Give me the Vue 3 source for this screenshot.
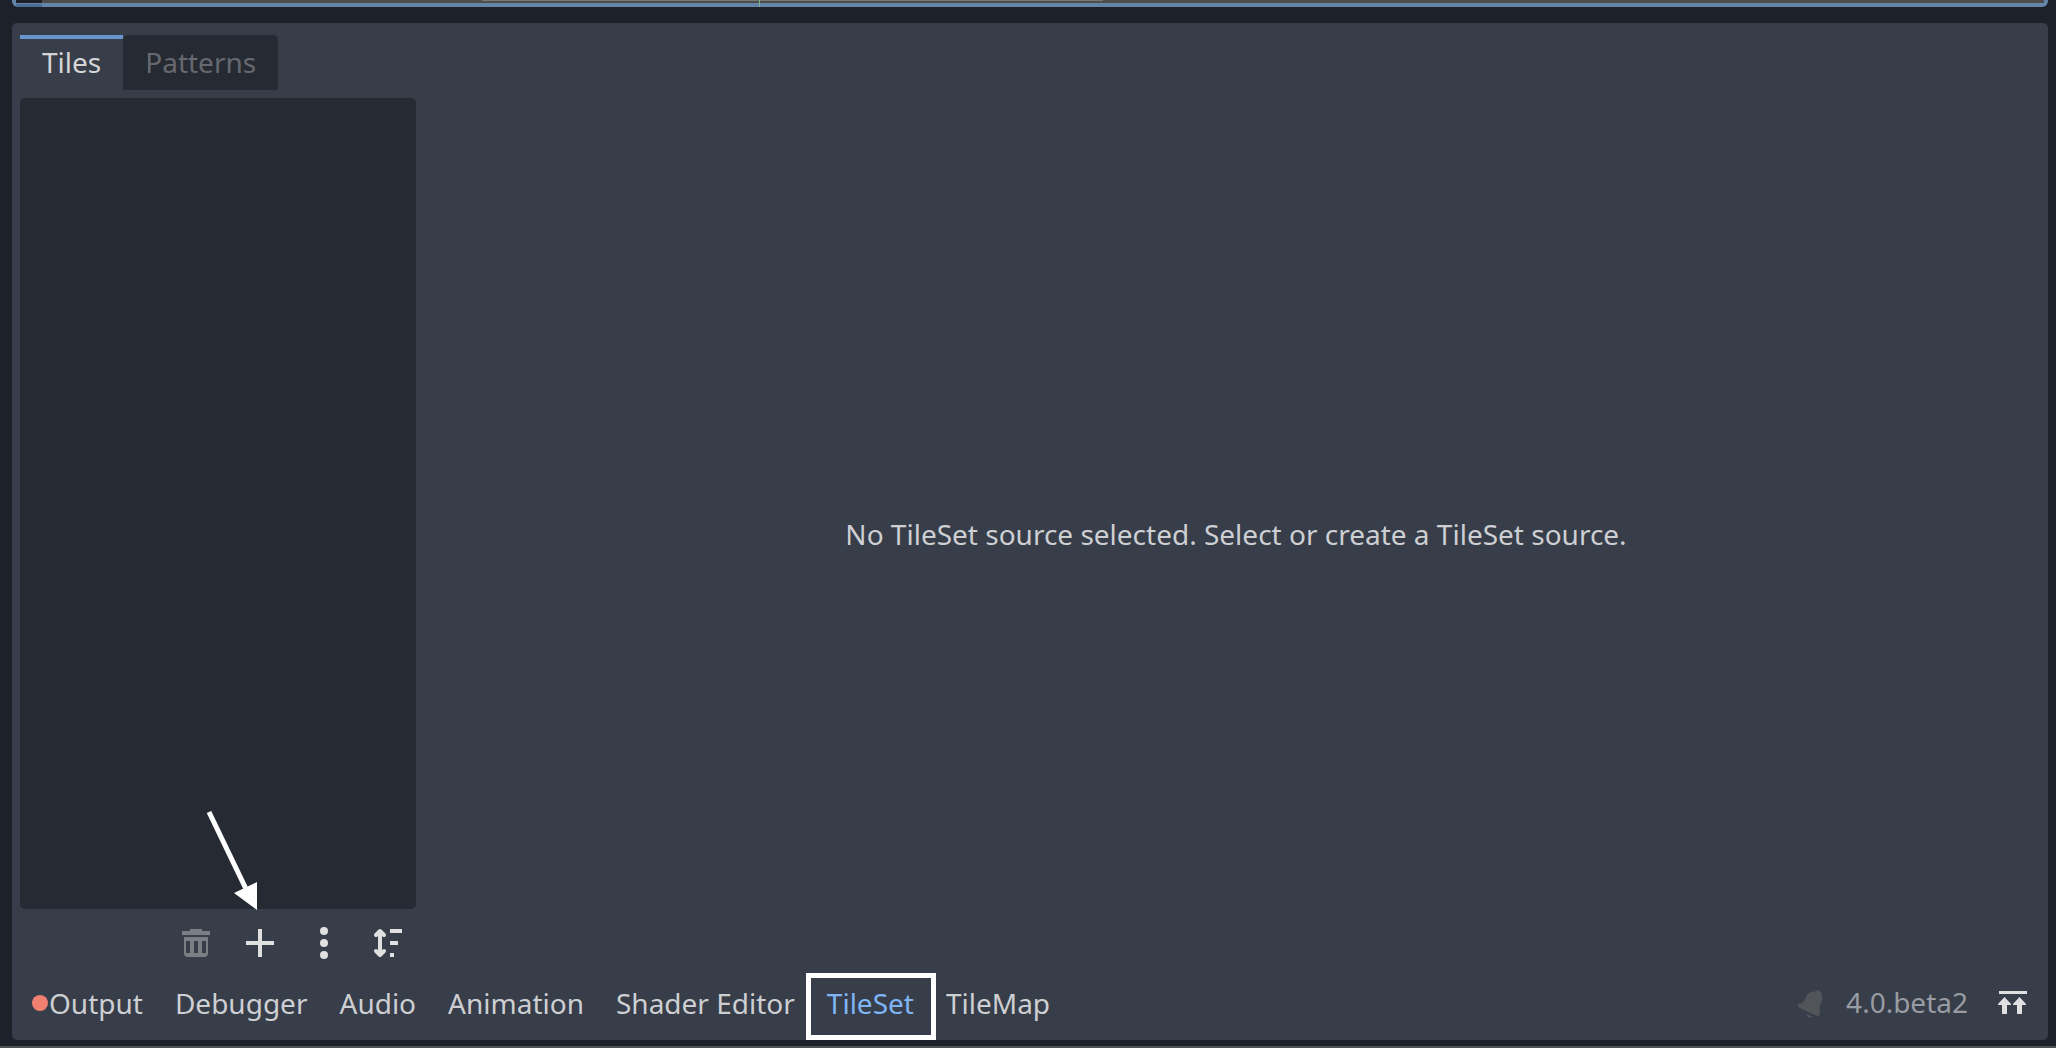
<script setup>
import { ref } from 'vue'

const activeTab = ref('Tiles')
const tabs = ['Tiles', 'Patterns']

const activePanel = ref('TileSet')
const panels = [
  { name: 'Output', alert: true },
  { name: 'Debugger' },
  { name: 'Audio' },
  { name: 'Animation' },
  { name: 'Shader Editor' },
  { name: 'TileSet', highlighted: true },
  { name: 'TileMap' },
]
</script>

<template>
  <div class="editor">
    <div class="viewport">
      <div class="ruler"></div>
      <div class="canvas">
        <div class="scrollbar"></div>
        <div class="axis"></div>
      </div>
    </div>

    <main class="dock">
      <div class="tabs" role="tablist">
        <button
          v-for="tab in tabs"
          :key="tab"
          type="button"
          role="tab"
          class="tab"
          :class="{ active: tab === activeTab }"
          :aria-selected="tab === activeTab"
          @click="activeTab = tab"
        >{{ tab }}</button>
      </div>

      <div class="content">
        <section class="sources">
          <div class="source-list"></div>
          <div class="tools">
            <button type="button" class="tool" disabled aria-label="Delete source">
              <svg viewBox="0 0 32 32" class="icon">
                <path fill-rule="evenodd" d="M10 2h12v2h8v4H2V4h8zM4 10h24v16q0 4-4 4H8q-4 0-4-4zM6 14v12h4V14zM14 14v12h4V14zM22 14v12h4V14z" />
              </svg>
            </button>
            <button type="button" class="tool" aria-label="Add source">
              <svg viewBox="0 0 32 32" class="icon">
                <path d="M14 2h4v12h12v4H18v12h-4V18H2v-4h12z" />
              </svg>
              <svg viewBox="0 0 64 104" class="pointer" aria-hidden="true">
                <path d="M9 3L47 82" stroke="#fff" stroke-width="5" />
                <path d="M57 73V101L34 84z" fill="#fff" />
              </svg>
            </button>
            <button type="button" class="tool" aria-label="More options">
              <svg viewBox="0 0 32 32" class="icon">
                <circle cx="16" cy="4" r="4" />
                <circle cx="16" cy="16" r="4" />
                <circle cx="16" cy="28" r="4" />
              </svg>
            </button>
            <button type="button" class="tool" aria-label="Sort sources">
              <svg viewBox="0 0 32 32" class="icon">
                <path d="M18 2h12v4H18zM18 14h8v4h-8zM18 26h4v4h-4z" />
                <path d="M8 5v22M4 8l4-4 4 4M4 24l4 4 4-4" fill="none" stroke="#e0e0e0" stroke-width="4" stroke-linecap="round" stroke-linejoin="round" />
              </svg>
            </button>
          </div>
        </section>
        <p class="message">No TileSet source selected. Select or create a TileSet source.</p>
      </div>

      <footer class="bottom">
        <button
          v-for="panel in panels"
          :key="panel.name"
          type="button"
          class="panel-button"
          :class="{ active: panel.name === activePanel, highlighted: panel.highlighted }"
          @click="activePanel = panel.name"
        ><span v-if="panel.alert" class="dot"></span>{{ panel.name }}</button>
        <div class="status">
          <svg viewBox="0 0 32 32" class="bell" aria-hidden="true">
            <path d="M22 4.500Q23.500 2 25.500 4Q28 5 28 9Q29 14 25.500 20L26 26Q26 29 23 29L5.500 21Q3 19.500 4 17.500Q4.500 16 8 16Q11 14 13 8Q15.500 4 22 4.500zM13 27L18.500 29.500Q15.500 32 13 29z" />
          </svg>
          <button type="button" class="version">4.0.beta2</button>
          <button type="button" class="tool" aria-label="Expand bottom panel">
            <svg viewBox="0 0 32 32" class="icon">
              <path d="M3 4h28v3H3zM8.500 10L15 17v1H11v9H6v-9H2v-1zM23.500 10L30 17v1H26v9H21v-9H17v-1z" />
            </svg>
          </button>
        </div>
      </footer>
    </main>
    <div class="edge"></div>
  </div>
</template>

<style>
body {
  background: #1d2129;
}
</style>

<style scoped>
.editor {
  display: flex;
  flex-direction: column;
  box-sizing: border-box;
  min-height: 100vh;
  background: #1d2129;
  color: #cdcfd2;
  font-family: "Noto Sans", "Open Sans", sans-serif;
  font-size: 28px;
  line-height: 38px;
}

button {
  margin: 0;
  padding: 0;
  border: 0;
  background: none;
  color: inherit;
  font: inherit;
  cursor: pointer;
}

.viewport {
  display: flex;
  height: 3px;
  margin: 0 8px 16px 12px;
  border: 4px solid #6485a8;
  border-top: 0;
  border-radius: 0 0 6px 6px;
}

.ruler {
  width: 26px;
  background: #1d2129;
  box-shadow: 0 4px #4b6f92;
}

.canvas {
  position: relative;
  flex: 1;
  background: #4d4d4b;
}

.scrollbar {
  width: 31%;
  height: 1px;
  margin-left: 22%;
  background: #777775;
}

.axis {
  position: absolute;
  top: 0;
  left: 36%;
  width: 1px;
  height: 7px;
  margin-left: -4px;
  background: #7fb096;
}

.dock {
  display: flex;
  flex: 1;
  flex-direction: column;
  margin: 0 8px 6px 12px;
  padding: 12px 8px 0;
  border-radius: 5px;
  background: #373d49;
}

.tabs {
  display: flex;
}

.tab {
  height: 55px;
  padding: 0 22px 2px;
  border-radius: 5px 5px 0 0;
  background: #262a32;
  color: #66696f;
}

.tab.active {
  border-radius: 0;
  background: #373d49;
  box-shadow: inset 0 4px #6696cc;
  color: #d4d5d7;
}

.content {
  display: flex;
  flex: 1;
  gap: 16px;
  margin-top: 8px;
}

.sources {
  display: flex;
  flex-direction: column;
  width: 396px;
}

.source-list {
  flex: 1;
  border-radius: 5px;
  background: #262a32;
}

.tools {
  display: flex;
  justify-content: flex-end;
  gap: 8px;
  margin-top: 8px;
}

.tool {
  position: relative;
  display: flex;
  align-items: center;
  justify-content: center;
  width: 56px;
  height: 52px;
}

.tool:disabled {
  opacity: 0.4;
}

.icon {
  width: 32px;
  height: 32px;
  overflow: visible;
  fill: #e0e0e0;
}

.pointer {
  position: absolute;
  bottom: 56px;
  left: -32px;
  width: 64px;
  height: 104px;
  pointer-events: none;
}

.message {
  flex: 1;
  align-self: center;
  margin: 0;
  text-align: center;
}

.bottom {
  display: flex;
  gap: 8px;
  padding: 8px 0 11px;
}

.panel-button {
  position: relative;
  display: flex;
  align-items: center;
  height: 52px;
  padding: 0 12px;
}

.panel-button.active {
  color: #80b5f5;
}

.panel-button.highlighted::after {
  content: "";
  position: absolute;
  inset: -4px -10px -11px -9px;
  border: 5px solid #fff;
}

.dot {
  width: 16px;
  height: 16px;
  margin-right: 1px;
  border-radius: 50%;
  background: #f08070;
}

.status {
  display: flex;
  align-items: center;
  margin-left: auto;
}

.bell {
  width: 32px;
  height: 32px;
  margin-right: 20px;
  fill: #515459;
}

.version {
  margin-right: 16px;
  padding-bottom: 2px;
  color: #999ca2;
}

.edge {
  height: 2px;
  background: #515356;
}
</style>
